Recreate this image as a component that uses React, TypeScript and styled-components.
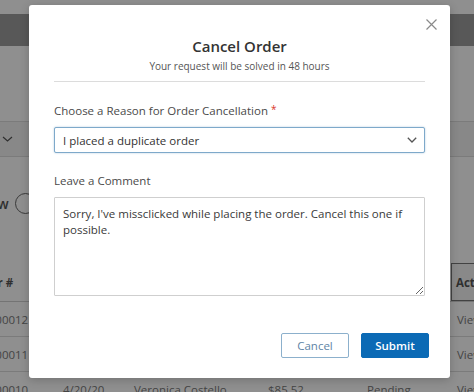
import React from 'react';
import styled, { createGlobalStyle } from 'styled-components';

const GlobalStyle = createGlobalStyle`
  html,
  body {
    margin: 0;
    padding: 0;
  }

  body {
    width: 474px;
    height: 392px;
    overflow: hidden;
    background: #fff;
    font-family: 'Open Sans', 'Liberation Sans', sans-serif;
  }

  * {
    box-sizing: border-box;
  }
`;

interface OrderRow {
  id: string;
  date: string;
  shipTo: string;
  total: string;
  status: string;
}

const orders: OrderRow[] = [
  { id: '000000012', date: '4/22/20', shipTo: 'Veronica Costello', total: '$39.00', status: 'Pending' },
  { id: '000000011', date: '4/21/20', shipTo: 'Veronica Costello', total: '$120.40', status: 'Pending' },
  { id: '000000010', date: '4/20/20', shipTo: 'Veronica Costello', total: '$85.52', status: 'Pending' },
];

export default function App() {
  return (
    <>
      <GlobalStyle />
      <Page>
        <TopStrip />
        <HeaderBar />
        <Toolbar>
          <svg width='11' height='6' viewBox='0 0 11 6'>
            <path d='M1 1l4.5 4L10 1' fill='none' stroke='#555' strokeWidth='1.2' />
          </svg>
        </Toolbar>
        <FilterRow>
          <FilterLabel>Show</FilterLabel>
          <Toggle />
        </FilterRow>
        <Table>
          <HeadRow>
            <HeadCell>Order #</HeadCell>
            <HeadCell>Date</HeadCell>
            <HeadCell>Ship To</HeadCell>
            <HeadCell>Order Total</HeadCell>
            <HeadCell>Status</HeadCell>
            <HeadCell boxed>Action</HeadCell>
          </HeadRow>
          {orders.map((o) => (
            <BodyRow key={o.id}>
              <Cell>{o.id}</Cell>
              <Cell>{o.date}</Cell>
              <Cell>{o.shipTo}</Cell>
              <Cell>{o.total}</Cell>
              <Cell>{o.status}</Cell>
              <Cell>View</Cell>
            </BodyRow>
          ))}
        </Table>

        <Overlay>
          <Modal>
            <CloseButton aria-label='Close'>
              <svg width='11' height='11' viewBox='0 0 11 11'>
                <path d='M0.5 0.5l10 10M10.5 0.5l-10 10' stroke='#8a8a8a' strokeWidth='1.2' />
              </svg>
            </CloseButton>
            <Header>
              <Title>Cancel Order</Title>
              <Subtitle>Your request will be solved in 48 hours</Subtitle>
            </Header>
            <Divider />
            <Label>
              Choose a Reason for Order Cancellation <Required>*</Required>
            </Label>
            <SelectWrap>
              <Select defaultValue='duplicate'>
                <option value='duplicate'>I placed a duplicate order</option>
                <option value='mind'>I changed my mind</option>
              </Select>
              <Chevron width='10' height='6' viewBox='0 0 10 6'>
                <path d='M0.8 0.8L5 5l4.2-4.2' fill='none' stroke='#555' strokeWidth='1.3' />
              </Chevron>
            </SelectWrap>
            <Label>Leave a Comment</Label>
            <Comment defaultValue="Sorry, I've missclicked while placing the order. Cancel this one if possible." />
            <Footer>
              <Button>Cancel</Button>
              <Button primary>Submit</Button>
            </Footer>
          </Modal>
        </Overlay>
      </Page>
    </>
  );
}

const Page = styled.div`
  position: relative;
  width: 474px;
  height: 392px;
  overflow: hidden;
  background: #fff;
`;

const TopStrip = styled.div`
  height: 14px;
`;

const HeaderBar = styled.div`
  height: 32px;
  background: #9d9d9d;
`;

const Toolbar = styled.div`
  height: 36px;
  margin-top: 75px;
  padding-left: 2px;

  display: flex;
  align-items: center;

  background: #f3f3f3;
  border-top: 1px solid #dcdcdc;
  border-bottom: 1px solid #dcdcdc;
`;

const FilterRow = styled.div`
  height: 21px;
  margin-top: 36px;
  margin-left: -28px;

  display: flex;
  align-items: center;
  gap: 6px;
`;

const FilterLabel = styled.span`
  font-size: 14px;
  font-weight: 600;
  color: #555;
`;

const Toggle = styled.span`
  width: 21px;
  height: 21px;

  border: 1.5px solid #666;
  border-radius: 50%;
`;

const Table = styled.div`
  margin-top: 49px;
  margin-left: -31px;

  font-size: 11.5px;
`;

const columns = '94px 71px 134px 99px 84px 80px';

const HeadRow = styled.div`
  height: 39px;

  display: grid;
  grid-template-columns: ${columns};

  border-bottom: 1px solid #cfcfcf;
`;

const HeadCell = styled.div<{ boxed?: boolean }>`
  display: flex;
  align-items: center;

  padding-left: ${({ boxed }) => (boxed ? '4px' : '0')};

  font-weight: 700;
  color: #555;

  border: ${({ boxed }) => (boxed ? '1.5px solid #777' : 'none')};
  background: ${({ boxed }) => (boxed ? '#f4f4f4' : 'transparent')};
`;

const BodyRow = styled.div`
  height: 35px;

  display: grid;
  grid-template-columns: ${columns};

  border-bottom: 1px solid #dcdcdc;
`;

const Cell = styled.div`
  display: flex;
  align-items: center;

  color: #7a7a7a;

  &:last-child {
    padding-left: 6px;
  }
`;

const Overlay = styled.div`
  position: absolute;
  inset: 0;

  background: rgba(0, 0, 0, 0.44);
`;

const Modal = styled.div`
  position: relative;

  width: 421px;
  height: 373px;
  margin: 5px 0 0 29px;
  padding: 0 25px;

  display: flex;
  flex-direction: column;

  background: #fff;
  border-radius: 3px;
  box-shadow: 0 2px 10px rgba(0, 0, 0, 0.2);
`;

const CloseButton = styled.button`
  position: absolute;
  top: 14px;
  right: 13px;

  width: 11px;
  height: 11px;
  padding: 0;

  display: flex;

  background: none;
  border: none;
  cursor: pointer;
`;

const Header = styled.div`
  padding-top: 30px;

  display: flex;
  flex-direction: column;
  align-items: center;
`;

const Title = styled.h2`
  margin: 0;

  font-size: 15px;
  font-weight: 600;
  line-height: 22px;
  color: #333;
`;

const Subtitle = styled.p`
  margin: 2px 0 0;

  font-size: 10px;
  line-height: 15px;
  color: #555;
`;

const Divider = styled.hr`
  width: 100%;
  height: 1px;
  margin: 7px 0 0;

  border: none;
  background: #dcdcdc;
`;

const Label = styled.label`
  display: block;
  margin-top: 19px;

  font-size: 11.5px;
  line-height: 17px;
  color: #4a4a4a;
`;

const Required = styled.span`
  color: #d9352b;
  font-size: 10px;
  vertical-align: 2px;
`;

const SelectWrap = styled.div`
  position: relative;
  margin-top: 8px;
`;

const Select = styled.select`
  width: 100%;
  height: 26px;
  padding: 0 0 0 8px;

  appearance: none;
  font-family: inherit;
  font-size: 11.5px;
  color: #333;

  background: #fff;
  border: 1px solid #7ea9ca;
  border-radius: 2px;
  box-shadow: 0 0 2px rgba(70, 130, 180, 0.45);
  outline: none;
`;

const Chevron = styled.svg`
  position: absolute;
  top: 10px;
  right: 8px;
  pointer-events: none;
`;

const Comment = styled.textarea`
  width: 100%;
  height: 99px;
  margin-top: 8px;
  padding: 8px;

  display: block;
  resize: both;

  font-family: inherit;
  font-size: 11.5px;
  line-height: 16px;
  color: #3a3a3a;

  border: 1px solid #cfcfcf;
  border-radius: 1px;
  outline: none;
`;

const Footer = styled.div`
  margin-top: 37px;
  margin-right: -4px;

  display: flex;
  justify-content: flex-end;
  gap: 12px;
`;

const Button = styled.button<{ primary?: boolean }>`
  width: 68px;
  height: 25px;

  font-family: inherit;
  font-size: 11.5px;
  font-weight: ${({ primary }) => (primary ? 600 : 400)};
  color: ${({ primary }) => (primary ? '#fff' : '#5e84a6')};

  background: ${({ primary }) => (primary ? '#0b6ab5' : '#fff')};
  border: 1px solid ${({ primary }) => (primary ? '#0b6ab5' : '#8cb0cc')};
  border-radius: 2px;
  cursor: pointer;
`;
